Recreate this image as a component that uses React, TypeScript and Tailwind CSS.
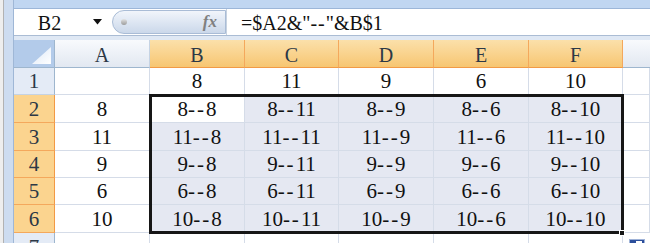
import React from 'react';

const COLS = ['A', 'B', 'C', 'D', 'E', 'F'];
const VALUES = [8, 11, 9, 6, 10];

const ColHeader = ({ label, active }: { label: string; active: boolean }) => (
    <div
        className={`flex items-center justify-center pt-[3px] text-[20px] text-[#2c3846] border-r border-b ${
            active
                ? 'bg-linear-to-b from-[#fbe0aa] to-[#f7c671] border-r-[#f4a85c] border-b-[#f29a45]'
                : 'bg-linear-to-b from-[#f8fafd] to-[#e2e8f1] border-r-[#c5d3e4] border-b-[#9eb6ce]'
        }`}
    >
        {label}
    </div>
);

const RowHeader = ({ label, active }: { label: string; active: boolean }) => (
    <div
        className={`flex items-center justify-center pt-[2px] text-[21px] text-[#2c3846] border-r border-b ${
            active
                ? 'bg-[#fbd48f] border-r-[#f29a45] border-b-[#f4a85c]'
                : 'bg-[#e4ebf6] border-r-[#9eb6ce] border-b-[#c5d3e4]'
        }`}
    >
        {label}
    </div>
);

const Cell = ({ children, selected }: { children?: React.ReactNode; selected?: boolean }) => (
    <div
        className={`flex items-center justify-center pt-[2px] text-[21px] text-[#111] border-r border-b border-[#d5dce8] ${
            selected ? 'bg-[#e5e8f2]' : 'bg-white'
        }`}
    >
        {children}
    </div>
);

export default function App() {
    return (
        <div className="w-[650px] h-[243px] overflow-hidden flex bg-white font-['Liberation_Serif','DejaVu_Serif',serif]">
            {/* left window edge */}
            <div className="w-[14px] h-full flex shrink-0">
                <div className="w-[3px] bg-[#eeeeee]" />
                <div className="w-px bg-[#b2b2b2]" />
                <div className="flex-1 bg-[#cddcf0]" />
                <div className="w-px bg-[#9fb7d6]" />
            </div>

            <div className="flex-1 flex flex-col">
                {/* ribbon edge */}
                <div className="h-[9px] shrink-0 bg-[#c0d6f1] border-b border-[#9cb6d8]" />

                {/* formula bar */}
                <div className="h-[26px] shrink-0 flex items-stretch bg-white">
                    <div className="w-[96px] flex items-center">
                        <span className="w-[71px] text-center text-[20px] text-[#111] pt-[2px]">B2</span>
                        <svg className="ml-[8px]" width="9" height="6" viewBox="0 0 9 6">
                            <path d="M0 0 H9 L4.5 5.5 Z" fill="#111" />
                        </svg>
                    </div>
                    <div className="ml-[2px] my-[1px] w-[114px] flex items-center rounded-l-full border border-[#a9bcd6] bg-linear-to-b from-[#f1f5fb] to-[#cbd8ea]">
                        <div className="ml-[8px] w-[6px] h-[6px] rounded-full bg-linear-to-b from-[#e2e2e2] to-[#9c9c9c]" />
                        <span className="ml-auto mr-[8px] text-[17px] italic font-bold text-[#808080]">fx</span>
                    </div>
                    <div className="flex-1 flex items-center pl-[14px] border-l border-[#c7d2e0] text-[20px] text-[#111] pt-[2px]">
                        =$A2&amp;"<span className="tracking-[1px]">--</span>"&amp;B$1
                    </div>
                </div>

                {/* gap under formula bar */}
                <div className="h-[5px] shrink-0 bg-[#dfe8f4] border-t border-[#aabcd4]" />

                {/* sheet grid */}
                <div className="relative h-[203px] shrink-0 overflow-hidden grid grid-cols-[41px_95px_95px_94px_95px_95px_94px_1fr] grid-rows-[28px_27px_28px_28px_27px_27px_28px_28px]">
                    {/* select all */}
                    <div className="relative bg-[#b3cbea] border-r border-b border-[#9eb6ce]">
                        <svg className="absolute right-[3px] bottom-[3px]" width="19" height="17" viewBox="0 0 19 17">
                            <defs>
                                <linearGradient id="sa" x1="0" y1="0" x2="1" y2="1">
                                    <stop offset="0%" stopColor="#dbe7f6" />
                                    <stop offset="100%" stopColor="#ffffff" />
                                </linearGradient>
                            </defs>
                            <path d="M19 0 V17 H0 Z" fill="url(#sa)" />
                        </svg>
                    </div>
                    {COLS.map((c) => (
                        <ColHeader key={c} label={c} active={c !== 'A'} />
                    ))}
                    <div className="bg-linear-to-b from-[#f8fafd] to-[#e2e8f1] border-b border-[#9eb6ce]" />

                    {/* row 1 */}
                    <RowHeader label="1" active={false} />
                    <Cell />
                    {VALUES.map((v, i) => (
                        <Cell key={i}>{v}</Cell>
                    ))}
                    <Cell />

                    {/* rows 2-6 */}
                    {VALUES.map((a, r) => (
                        <React.Fragment key={r}>
                            <RowHeader label={String(r + 2)} active />
                            <Cell>{a}</Cell>
                            {VALUES.map((b, c) => (
                                <Cell key={c} selected={!(r === 0 && c === 0)}>
                                    {a}
                                    <span className="tracking-[2px]">--</span>
                                    {b}
                                </Cell>
                            ))}
                            <Cell />
                        </React.Fragment>
                    ))}

                    {/* row 7 (cut off by the window) */}
                    <RowHeader label="7" active={false} />
                    {COLS.map((c) => (
                        <div key={c} className="bg-white border-r border-[#d5dce8]" />
                    ))}
                    <div className="bg-white" />

                    {/* selection outline B2:F6 */}
                    <div className="absolute left-[135px] top-[54px] w-[475px] h-[140px] border-[3px] border-[#161616] pointer-events-none" />
                    <div className="absolute left-[605px] top-[190px] w-[6px] h-[6px] bg-[#161616] border border-white pointer-events-none" />

                    {/* corner widget */}
                    <div className="absolute left-[615px] top-[199px] w-[16px] h-[6px] bg-[#2d4f9c] border border-[#9fb3d8]">
                        <div className="ml-[6px] mt-[1px] w-[6px] h-[4px] bg-white" />
                    </div>
                </div>
            </div>
        </div>
    );
}
